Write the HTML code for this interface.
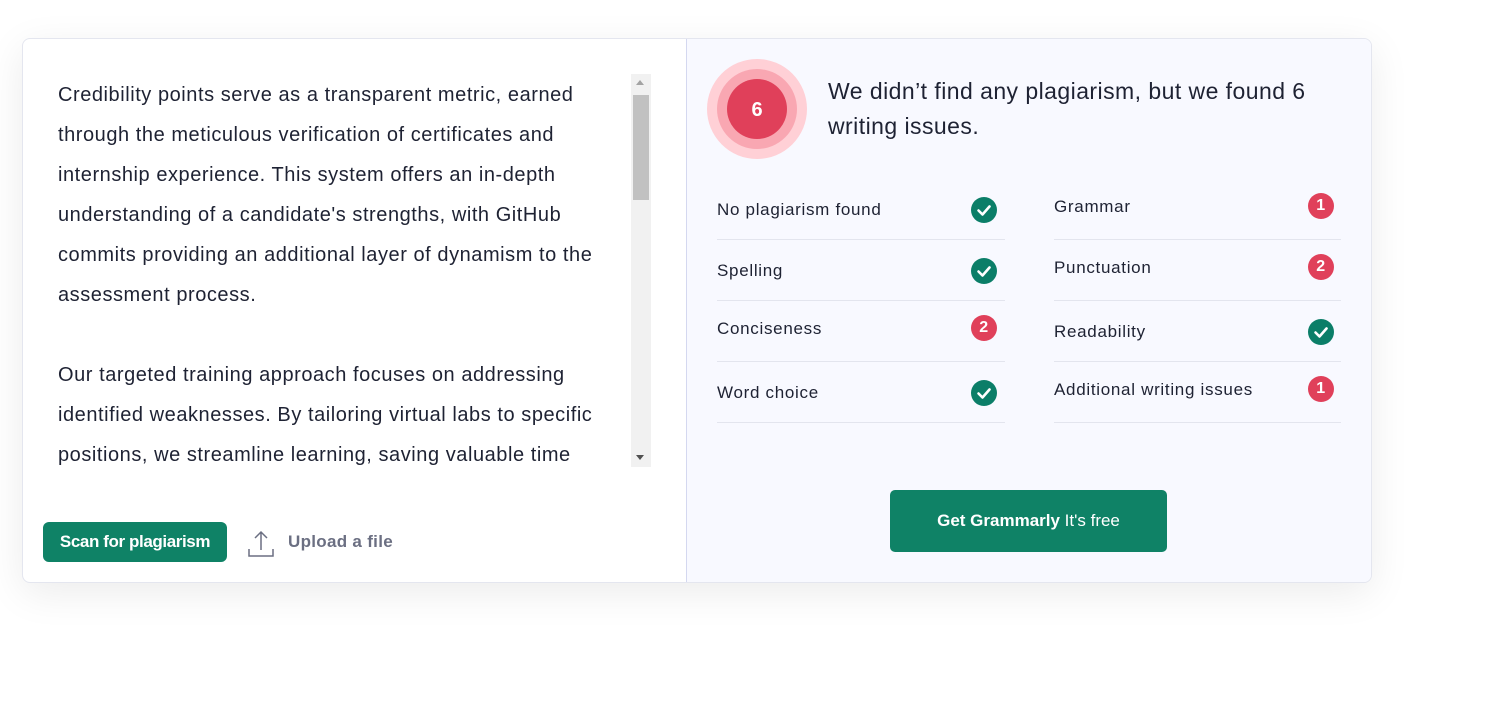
<!DOCTYPE html>
<html><head><style>
body{margin:0;width:1506px;height:723px;background:#fff;font-family:"Liberation Sans",sans-serif;position:relative;overflow:hidden}
.card{position:absolute;left:22px;top:38px;width:1348px;height:543px;border:1px solid #e4e6ef;border-radius:8px;background:#fff;box-shadow:0 10px 40px rgba(0,0,0,0.08);overflow:hidden}
.right{position:absolute;left:663px;top:0;width:685px;height:543px;background:#f8f9ff;border-left:1px solid #d4d8f0}
.txt{position:absolute;left:35px;top:36px;width:570px;font-size:20px;line-height:40px;color:#1e2233;height:393px;overflow:hidden;white-space:nowrap;letter-spacing:0.55px}
.sb{position:absolute;left:608px;top:35px;width:20px;height:393px;background:#f1f1f1}
.thumb{position:absolute;left:2px;top:21px;width:16px;height:105px;background:#c1c1c1}
.a{position:absolute;left:5px;width:0;height:0;border-left:4px solid transparent;border-right:4px solid transparent}
.scan{position:absolute;left:20px;top:483px;width:184px;height:40px;background:#0f8266;border-radius:6px;color:#fff;font-weight:bold;font-size:17px;line-height:40px;text-align:center;letter-spacing:-0.4px}
.up{position:absolute;left:265px;top:493px;font-size:17px;font-weight:bold;color:#6b6f82;letter-spacing:0.3px}
.head{position:absolute;left:141px;top:35px;font-size:23px;line-height:35px;color:#1e2233;letter-spacing:0.45px}
.row{position:absolute;height:61px;border-bottom:1px solid #e3e5ee;font-size:17px;color:#1e2233;letter-spacing:0.7px}
.row span{position:absolute;left:0}
.ic{position:absolute;right:8px;width:26px;height:26px;border-radius:50%;color:#fff;font-weight:bold;font-size:16px;text-align:center;line-height:26px}
.ok{background:#0b7e68}.bad{background:#e0405a}
.ic svg{position:absolute;left:0;top:0}
.btn{position:absolute;left:203px;top:451px;width:277px;height:62px;background:#0f8266;border-radius:5px;color:#fff;font-size:17px;line-height:62px;text-align:center}
</style></head><body>
<div class="card">
<div class="txt">Credibility points serve as a transparent metric, earned<br>through the meticulous verification of certificates and<br>internship experience. This system offers an in-depth<br>understanding of a candidate's strengths, with GitHub<br>commits providing an additional layer of dynamism to the<br>assessment process.<br><br>Our targeted training approach focuses on addressing<br>identified weaknesses. By tailoring virtual labs to specific<br>positions, we streamline learning, saving valuable time</div>
<div class="sb"><div class="a" style="top:6px;border-bottom:5px solid #a3a3a3"></div><div class="thumb"></div><div class="a" style="top:381px;border-top:5px solid #505050"></div></div>
<div class="scan">Scan for plagiarism</div>
<svg style="position:absolute;left:224px;top:490px" width="28" height="30" viewBox="0 0 28 30" fill="none" stroke="#6b6f82" stroke-width="1.5"><path d="M14 21V3M8 9l6-6 6 6M2 20v7h24v-7"/></svg>
<div class="up">Upload a file</div>
<div class="right">
<svg style="position:absolute;left:19px;top:19px" width="102" height="102"><circle cx="51" cy="51" r="50" fill="#ffd0d6"/><circle cx="51" cy="51" r="40" fill="#f9a7b2"/><circle cx="51" cy="51" r="30" fill="#e0405a"/><text x="51" y="58" text-anchor="middle" fill="#fff" font-family="Liberation Sans" font-weight="bold" font-size="20">6</text></svg>
<div class="head">We didn’t find any plagiarism, but we found 6<br>writing issues.</div>
<div class="row" style="left:30px;top:139px;width:288px"><span style="top:22px">No plagiarism found</span><div class="ic ok" style="top:19px"><svg width="26" height="26"><path d="M7.5 13.5l4 4 7-8" fill="none" stroke="#fff" stroke-width="2.6" stroke-linecap="round" stroke-linejoin="round"/></svg></div></div>
<div class="row" style="left:30px;top:200px;width:288px"><span style="top:22px">Spelling</span><div class="ic ok" style="top:19px"><svg width="26" height="26"><path d="M7.5 13.5l4 4 7-8" fill="none" stroke="#fff" stroke-width="2.6" stroke-linecap="round" stroke-linejoin="round"/></svg></div></div>
<div class="row" style="left:30px;top:261px;width:288px"><span style="top:19px">Conciseness</span><div class="ic bad" style="top:15px">2</div></div>
<div class="row" style="left:30px;top:322px;width:288px"><span style="top:22px">Word choice</span><div class="ic ok" style="top:19px"><svg width="26" height="26"><path d="M7.5 13.5l4 4 7-8" fill="none" stroke="#fff" stroke-width="2.6" stroke-linecap="round" stroke-linejoin="round"/></svg></div></div>
<div class="row" style="left:367px;top:139px;width:287px"><span style="top:19px">Grammar</span><div class="ic bad" style="top:15px;right:7px">1</div></div>
<div class="row" style="left:367px;top:200px;width:287px"><span style="top:19px">Punctuation</span><div class="ic bad" style="top:15px;right:7px">2</div></div>
<div class="row" style="left:367px;top:261px;width:287px"><span style="top:22px">Readability</span><div class="ic ok" style="top:19px;right:7px"><svg width="26" height="26"><path d="M7.5 13.5l4 4 7-8" fill="none" stroke="#fff" stroke-width="2.6" stroke-linecap="round" stroke-linejoin="round"/></svg></div></div>
<div class="row" style="left:367px;top:322px;width:287px"><span style="top:19px">Additional writing issues</span><div class="ic bad" style="top:15px;right:7px">1</div></div>
<div class="btn"><b>Get Grammarly</b> It's free</div>
</div>
</div>
</body></html>
